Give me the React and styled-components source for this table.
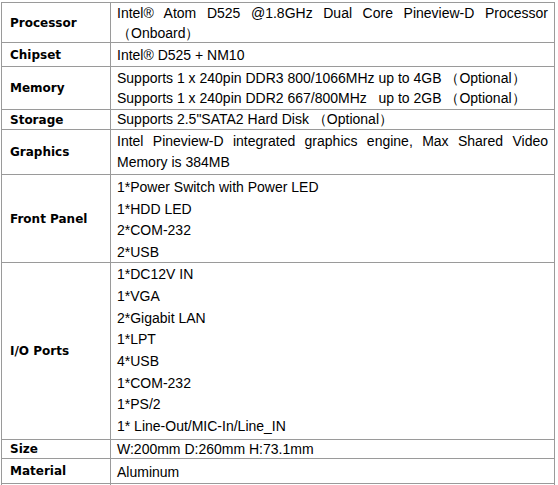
import React from "react";
import styled, { createGlobalStyle } from "styled-components";

const Global = createGlobalStyle`
  html, body { margin: 0; padding: 0; background: #ffffff; }
  body { font-family: "Liberation Sans", Arial, sans-serif; color: #000; }
`;

const Table = styled.div`
  width: 552px;
  margin: 2px 0 0 1px;
  border-top: 1px solid #9a9a9a;
  border-left: 1px solid #9a9a9a;
  border-right: 1px solid #9a9a9a;
`;

const Row = styled.div`
  display: grid;
  grid-template-columns: 109px 1fr;
  height: ${(p) => p.$h}px;
  border-bottom: ${(p) => (p.$open ? "none" : "1px solid #9a9a9a")};
  box-sizing: content-box;
  overflow: hidden;
`;

const Label = styled.div`
  display: flex;
  align-items: center;
  padding-left: 8px;
  border-right: 1px solid #9a9a9a;
  font-family: "DejaVu Sans", Verdana, sans-serif;
  font-weight: bold;
  font-size: 12px;
  white-space: nowrap;
`;

const Content = styled.div`
  display: flex;
  flex-direction: column;
  justify-content: center;
  padding: ${(p) => p.$pt || 0}px 6px 0 6px;
  font-size: 14px;
`;

const Line = styled.div`
  line-height: ${(p) => p.$lh}px;
  white-space: ${(p) => (p.$justify ? "normal" : "pre")};
  text-align: ${(p) => (p.$justify ? "justify" : "left")};
  text-align-last: ${(p) => (p.$justify ? "justify" : "auto")};
`;

const rows = [
  {
    label: "Processor",
    h: 39,
    lh: 20,
    lines: [
      { t: "Intel® Atom D525 @1.8GHz Dual Core Pineview-D Processor", j: true },
      { t: "（Onboard）" },
    ],
  },
  { label: "Chipset", h: 23, lh: 20, lines: [{ t: "Intel® D525 + NM10" }] },
  {
    label: "Memory",
    h: 42,
    lh: 20.5,
    lines: [
      { t: "Supports 1 x 240pin DDR3 800/1066MHz up to 4GB （Optional）" },
      { t: "Supports 1 x 240pin DDR2 667/800MHz   up to 2GB （Optional）" },
    ],
  },
  { label: "Storage", h: 19, lh: 19, lines: [{ t: "Supports 2.5\"SATA2 Hard Disk （Optional）" }] },
  {
    label: "Graphics",
    h: 44,
    lh: 21.5,
    lines: [
      { t: "Intel Pineview-D integrated graphics engine, Max Shared Video", j: true },
      { t: "Memory is 384MB" },
    ],
  },
  {
    label: "Front Panel",
    h: 87,
    lh: 21.7,
    pt: 2,
    lines: [
      { t: "1*Power Switch with Power LED" },
      { t: "1*HDD LED" },
      { t: "2*COM-232" },
      { t: "2*USB" },
    ],
  },
  {
    label: "I/O Ports",
    h: 176,
    lh: 21.7,
    lines: [
      { t: "1*DC12V IN" },
      { t: "1*VGA" },
      { t: "2*Gigabit LAN" },
      { t: "1*LPT" },
      { t: "4*USB" },
      { t: "1*COM-232" },
      { t: "1*PS/2" },
      { t: "1* Line-Out/MIC-In/Line_IN" },
    ],
  },
  { label: "Size", h: 18, lh: 18, lines: [{ t: "W:200mm D:260mm H:73.1mm" }] },
  { label: "Material", h: 24, lh: 20, pt: 2, lines: [{ t: "Aluminum" }] },
  { label: "", h: 1, lh: 1, open: true, lines: [{ t: "" }] },
];

export default function App() {
  return (
    <>
      <Global />
      <Table>
        {rows.map((r, i) => (
          <Row key={i} $h={r.h} $open={r.open}>
            <Label>{r.label}</Label>
            <Content $pt={r.pt}>
              {r.lines.map((l, k) => (
                <Line key={k} $lh={r.lh} $justify={l.j}>
                  {l.t}
                </Line>
              ))}
            </Content>
          </Row>
        ))}
      </Table>
    </>
  );
}
